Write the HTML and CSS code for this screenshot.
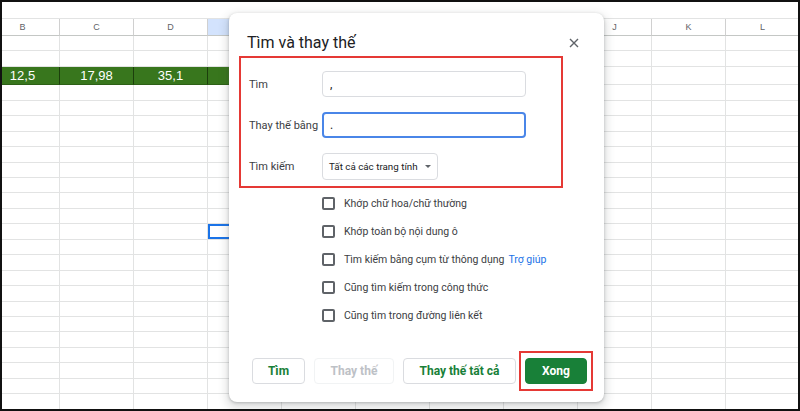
FILE: index.html
```html
<!DOCTYPE html>
<html lang="vi">
<head>
  <meta charset="UTF-8">
  <title>Tìm và thay thế</title>
  <link rel="stylesheet" href="styles.css">
</head>
<body>
  <div class="frame">
    <div class="sheet">
      <div class="row head">
        <div class="cell">B</div>
        <div class="cell">C</div>
        <div class="cell">D</div>
        <div class="cell on">E</div>
        <div class="cell">F</div>
        <div class="cell">G</div>
        <div class="cell">H</div>
        <div class="cell">I</div>
        <div class="cell">J</div>
        <div class="cell">K</div>
        <div class="cell">L</div>
      </div>
      <div id="rows"></div>
    </div>

    <div class="dialog">
      <div class="dialog-head">
        <h1>Tìm và thay thế</h1>
        <svg class="close" width="10" height="10" viewBox="0 0 10 10">
          <path d="M1 1L9 9M9 1L1 9" stroke="#5f6368" stroke-width="1.4" fill="none"/>
        </svg>
      </div>

      <div class="fields">
        <div class="field">
          <label>Tìm</label>
          <input type="text" value=",">
        </div>
        <div class="field">
          <label>Thay thế bằng</label>
          <input type="text" class="active" value=".">
        </div>
        <div class="field">
          <label>Tìm kiếm</label>
          <div class="select">
            Tất cả các trang tính
            <svg width="6" height="3" viewBox="0 0 6 3"><path d="M0 0H6L3 3Z" fill="#5f6368"/></svg>
          </div>
        </div>
      </div>

      <div class="options">
        <label class="check"><input type="checkbox"> Khớp chữ hoa/chữ thường</label>
        <label class="check"><input type="checkbox"> Khớp toàn bộ nội dung ô</label>
        <label class="check"><input type="checkbox"> Tìm kiếm bằng cụm từ thông dụng <a class="help">Trợ giúp</a></label>
        <label class="check"><input type="checkbox"> Cũng tìm kiếm trong công thức</label>
        <label class="check"><input type="checkbox"> Cũng tìm trong đường liên kết</label>
      </div>

      <div class="actions">
        <button class="btn find">Tìm</button>
        <button class="btn replace" disabled>Thay thế</button>
        <button class="btn replace-all">Thay thế tất cả</button>
        <span class="mark"><button class="btn primary">Xong</button></span>
      </div>
    </div>
  </div>

  <script>
    // empty grid rows, row 3 holds the green values
    const rows = document.getElementById('rows');
    const values = ['12,5', '17,98', '35,1'];
    for (let r = 0; r < 24; r++) {
      const row = document.createElement('div');
      row.className = r === 2 ? 'row filled' : 'row';
      for (let c = 0; c < 11; c++) {
        const cell = document.createElement('div');
        cell.className = 'cell';
        if (r === 2 && c < 4) {
          cell.classList.add('green');
          cell.textContent = values[c] || '';
        }
        if (r === 12 && c === 3) cell.classList.add('picked');
        row.appendChild(cell);
      }
      rows.appendChild(row);
    }
  </script>
</body>
</html>
```

FILE: styles.css
```css
body { margin: 0; font-family: Roboto, "Liberation Sans", sans-serif; }

.frame { position: relative; width: 800px; height: 411px; box-sizing: border-box; border: 2px solid #111; overflow: hidden; background: #fff; }

/* spreadsheet behind the dialog */
.sheet { margin-left: -16px; padding-top: 16px; font-family: "Liberation Sans", Arial, sans-serif; }
.row { display: flex; height: 15.45px; }
.cell { flex: 0 0 74px; box-sizing: border-box; border-right: 1px solid #e2e3e3; border-bottom: 1px solid #e2e3e3; }
.row.head { height: 18px; box-sizing: border-box; border-top: 1px solid #e2e3e3; }
.head .cell { display: flex; align-items: center; justify-content: center; font-size: 9px; color: #5f6368; border-right-color: #d0d0d0; border-bottom-color: #c4c7c5; }
.head .cell.on { background: #d3e3fd; }
.row.filled { height: 18.5px; }
.cell.green { display: flex; align-items: center; justify-content: center; background: #38761d; color: #fff; font-size: 13px; border-right-color: #1c3f0c; border-bottom-color: #2d6016; }
.cell.picked { box-shadow: inset 0 0 0 2px #1a73e8; }

/* find & replace dialog */
.dialog { position: absolute; left: 227px; top: 11px; width: 375px; height: 389px; box-sizing: border-box; background: #fff; border-radius: 8px; box-shadow: 0 4px 8px 3px rgba(60,64,67,.15), 0 1px 3px rgba(60,64,67,.3); }
.dialog-head { display: flex; align-items: center; justify-content: space-between; padding: 20px 25px 0 18px; height: 20px; }
.dialog-head h1 { margin: 0; font-size: 16px; font-weight: 400; line-height: 20px; color: #202124; }

.fields { margin: 3px 0 0 10px; width: 324px; box-sizing: border-box; border: 2px solid #e53935; padding: 13px 0 6px 8px; display: flex; flex-direction: column; gap: 15px; }
.field { display: flex; align-items: center; }
.field label { width: 73px; font-size: 11px; color: #3c4043; }
.field input { width: 204px; height: 26px; box-sizing: border-box; margin: 0; padding: 0 7px; border: 1px solid #dadce0; border-radius: 4px; font: 12px Roboto, sans-serif; color: #202124; outline: none; }
.field input.active { border: 2px solid #4a86e8; padding: 0 6px; }
.select { width: 116px; height: 27px; box-sizing: border-box; display: inline-flex; align-items: center; justify-content: space-between; padding: 0 6px; border: 1px solid #dadce0; border-radius: 4px; font-size: 9.8px; color: #202124; white-space: nowrap; }

.options { padding-left: 93px; margin-top: 1px; }
.check { display: flex; align-items: center; height: 28px; font-size: 10.5px; color: #3c4043; }
.check input { appearance: none; width: 13px; height: 13px; margin: 0 9px 0 0; border: 2px solid #5f6368; border-radius: 2px; }
.help { color: #1a73e8; margin-left: 4px; }

.actions { display: flex; gap: 9px; margin-top: 29px; padding-left: 23px; }
.btn { height: 26px; box-sizing: border-box; padding: 0; background: #fff; border: 1px solid #dadce0; border-radius: 4px; color: #188038; font: 700 12px Roboto, sans-serif; }
.btn.find { width: 53px; }
.btn.replace { width: 80px; }
.btn.replace-all { width: 113px; }
.btn:disabled { border-color: #f1f3f4; color: #bdc1c6; }
.btn.primary { width: 62px; background: #188038; border-color: #188038; color: #fff; }
/* red highlight box round the done button */
.mark { display: flex; margin: -7px -6px; padding: 5px 4px; border: 2px solid #e53935; }
```
